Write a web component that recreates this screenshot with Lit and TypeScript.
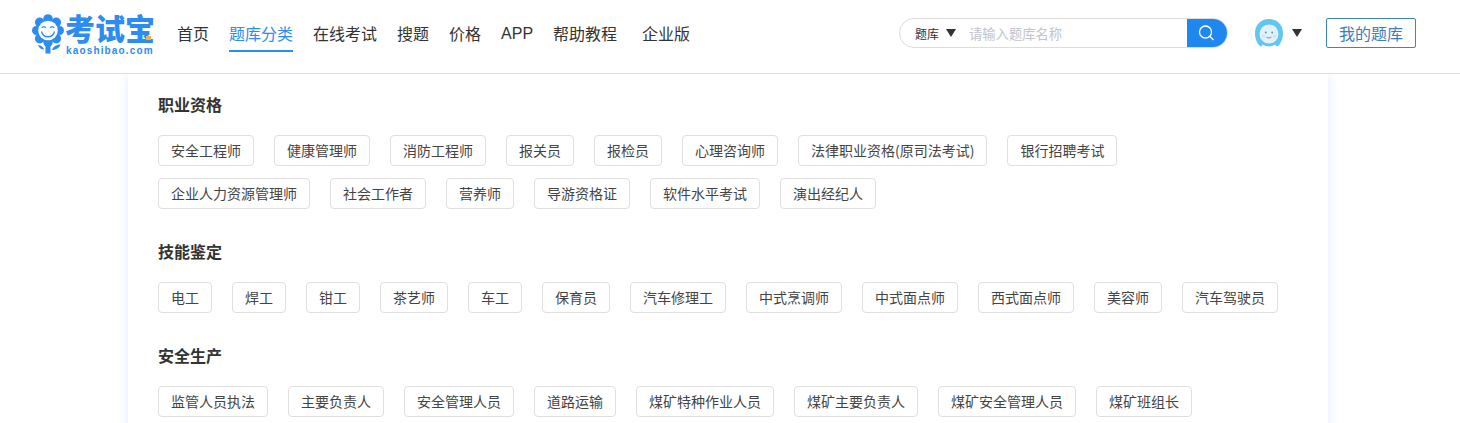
import { LitElement, html, css, svg } from "lit";
import { customElement } from "lit/decorators.js";

const NAV = [
  { t: "首页" },
  { t: "题库分类", active: true },
  { t: "在线考试" },
  { t: "搜题" },
  { t: "价格" },
  { t: "APP", cls: "app" },
  { t: "帮助教程" },
  { t: "企业版", cls: "last" },
];

const SECTIONS = [
  {
    title: "职业资格",
    tags: ["安全工程师", "健康管理师", "消防工程师", "报关员", "报检员", "心理咨询师", "法律职业资格(原司法考试)", "银行招聘考试", "企业人力资源管理师", "社会工作者", "营养师", "导游资格证", "软件水平考试", "演出经纪人"],
  },
  {
    title: "技能鉴定",
    tags: ["电工", "焊工", "钳工", "茶艺师", "车工", "保育员", "汽车修理工", "中式烹调师", "中式面点师", "西式面点师", "美容师", "汽车驾驶员"],
  },
  {
    title: "安全生产",
    tags: ["监管人员执法", "主要负责人", "安全管理人员", "道路运输", "煤矿特种作业人员", "煤矿主要负责人", "煤矿安全管理人员", "煤矿班组长"],
  },
];

const flowerIcon = svg`
  <svg class="flower" width="32" height="40" viewBox="0 0 32 40">
    <g fill="#2d8cf0">
      <circle cx="16" cy="5" r="4.800" /><circle cx="24.300" cy="8.300" r="4.800" /><circle cx="27.500" cy="16.500" r="4.500" />
      <circle cx="24.300" cy="24.700" r="4.800" /><circle cx="16" cy="28" r="4.800" /><circle cx="7.700" cy="24.700" r="4.800" />
      <circle cx="4.500" cy="16.500" r="4.500" /><circle cx="7.700" cy="8.300" r="4.800" /><circle cx="16" cy="16.500" r="11" />
      <rect x="13.500" y="30" width="5" height="9.500" />
      <path d="M20 36c.8-3 3.800-5.500 8.500-5.500-1 3.200-4.200 5.500-8.500 5.500zM12 35.500c-.6-2.400-2.700-4.200-6-4.500 .7 2.700 3 4.500 6 4.500z" />
    </g>
    <circle cx="16" cy="16.500" r="9.800" fill="#fff" />
    <path d="M9.500 17.500c1.500 7 11.500 7 13 0" fill="none" stroke="#2d8cf0" stroke-width="1.300" />
    <path d="M9.800 14c1-1.800 3-1.800 4 0M18.200 14c1-1.800 3-1.800 4 0" fill="none" stroke="#2d8cf0" stroke-width="1.200" />
  </svg>`;

const searchIcon = svg`
  <svg width="18" height="18" viewBox="0 0 18 18" fill="none" stroke="#fff" stroke-width="1.300">
    <circle cx="8.500" cy="8" r="6" /><path d="M13 12.500l3.500 3.500" />
  </svg>`;

const avatarIcon = svg`
  <svg width="30" height="30" viewBox="0 0 30 30">
    <path d="M15 1C7 1 1 7 1 15c0 6 2 10.500 5 13 1.200 1 2.500 0 2.500-1.500C13 29 17 29 21.500 26.500 21.500 28 22.800 29 24 28c3-2.500 5-7 5-13C29 7 23 1 15 1z" fill="#62c6f2" />
    <circle cx="15" cy="16" r="9.500" fill="#e3f1fb" />
    <circle cx="9.500" cy="18" r="1.800" fill="#cfe4f5" /><circle cx="20.500" cy="18" r="1.800" fill="#cfe4f5" />
    <circle cx="11.800" cy="14.500" r="1" fill="#6f8ea6" /><circle cx="18.200" cy="14.500" r="1" fill="#6f8ea6" />
    <path d="M12.500 19c1.300 1.300 3.700 1.300 5 0" fill="none" stroke="#6f8ea6" stroke-width="1" />
  </svg>`;

@customElement("app-root")
export class AppRoot extends LitElement {
  static styles = css`
    :host {
      display: block;
      height: 423px;
      overflow: hidden;
      background: #fff;
      font-family: "Noto Sans CJK SC", "Liberation Sans", sans-serif;
      color: #333;
    }
    header {
      height: 73px;
      box-sizing: content-box;
      border-bottom: 1px solid #dcdcdc;
      display: flex;
      align-items: flex-start;
      padding-left: 32px;
      background: #fff;
      position: relative;
      z-index: 1;
    }
    .logo {
      display: flex;
      align-items: flex-start;
      width: 145px;
      color: #2d8cf0;
      margin-top: 14px;
      position: relative;
    }
    .flower { flex: none; }
    .logo-text { display: flex; flex-direction: column; align-items: flex-start; margin-left: 1px; }
    .logo-cn {
      font-family: "Liberation Sans", "Noto Sans CJK SC", sans-serif;
      font-size: 30px;
      line-height: 30px;
      height: 30px;
      margin-top: 1px;
      font-weight: 900;
      white-space: nowrap;
    }
    .dot { position: absolute; left: 114px; top: 22px; width: 5px; height: 4px; background: #f5b04a; }
    .logo-en {
      font-family: "Liberation Sans", sans-serif;
      font-size: 10px;
      line-height: 12px;
      font-weight: 700;
      letter-spacing: 1.15px;
      padding-left: 1px;
    }
    nav { display: flex; gap: 20px; height: 73px; }
    .nav-item {
      font-size: 16px;
      line-height: 24px;
      padding-top: 21px;
      color: #333;
      white-space: nowrap;
      font-weight: 400;
    }
    .nav-item.app { min-width: 32px; padding-top: 22px; font-family: "Liberation Sans", sans-serif; }
    .nav-item.last { margin-left: 5px; }
    .nav-item.active { color: #2d8cf0; }
    .nav-item.active span { display: block; height: 29px; border-bottom: 2px solid #2d8cf0; }
    .spacer { flex: 1; }
    .right { display: flex; align-items: center; height: 30px; margin-top: 18px; margin-right: 44px; }
    .search {
      width: 329px;
      height: 30px;
      box-sizing: border-box;
      border: 1px solid #dcdcdc;
      border-radius: 15px;
      display: flex;
      align-items: center;
      overflow: hidden;
      margin-right: 26px;
    }
    .scope { font-size: 12px; color: #333; margin-left: 15px; white-space: nowrap; font-weight: 400; }
    .tri { width: 0; height: 0; border-left: 5px solid transparent; border-right: 5px solid transparent; border-top: 8px solid #333; flex: none; }
    .search .tri { margin-left: 7px; }
    .ph { flex: 1; font-size: 13.3px; color: #c0c4cc; margin-left: 13px; white-space: nowrap; font-weight: 400; }
    .btn {
      width: 40px;
      height: 30px;
      background: #1e88f0;
      display: flex;
      align-items: center;
      justify-content: center;
      flex: none;
      padding-right: 3px;
      box-sizing: border-box;
    }
    .avatar { display: flex; align-items: center; gap: 8px; margin-right: 24px; }
    .avatar svg { display: block; }
    .my {
      width: 90px;
      height: 30px;
      box-sizing: border-box;
      border: 1px solid #3a87b8;
      border-radius: 2px;
      color: #3d7eb8;
      font-size: 16px;
      font-weight: 400;
      display: flex;
      align-items: center;
      justify-content: center;
    }
    .page { padding-right: 4px; }
    main {
      width: 1200px;
      margin: 0 auto;
      box-sizing: border-box;
      padding: 18px 0 0 30px;
      box-shadow: 0 0 10px rgba(64, 140, 255, 0.16);
      height: 400px;
      background: #fff;
    }
    .section { margin-bottom: 30px; }
    h2 {
      margin: 0 0 19px;
      font-size: 16px;
      line-height: 24px;
      font-weight: 700;
      color: #333;
    }
    .tags { display: flex; flex-wrap: wrap; width: 1140px; row-gap: 12px; }
    .tag {
      height: 31px;
      box-sizing: border-box;
      padding: 0 12px;
      margin-right: 20px;
      border: 1px solid #e0e0e0;
      border-radius: 4px;
      font-size: 14px;
      line-height: 29px;
      font-weight: 400;
      color: #444;
      white-space: nowrap;
    }
  `;

  render() {
    return html`
      <header>
        <div class="logo">
          ${flowerIcon}
          <div class="logo-text">
            <div class="logo-cn">考试宝</div>
            <div class="logo-en">kaoshibao.com</div>
          </div>
          <i class="dot"></i>
        </div>
        <nav>
          ${NAV.map(
            (n) => html`<div class="nav-item ${n.active ? "active" : ""} ${n.cls ?? ""}">
              <span>${n.t}</span>
            </div>`
          )}
        </nav>
        <div class="spacer"></div>
        <div class="right">
          <div class="search">
            <span class="scope">题库</span>
            <i class="tri"></i>
            <span class="ph">请输入题库名称</span>
            <div class="btn">${searchIcon}</div>
          </div>
          <div class="avatar">${avatarIcon}<i class="tri"></i></div>
          <div class="my">我的题库</div>
        </div>
      </header>
      <div class="page">
        <main>
          ${SECTIONS.map(
            (s) => html`<section class="section">
              <h2>${s.title}</h2>
              <div class="tags">${s.tags.map((t) => html`<div class="tag">${t}</div>`)}</div>
            </section>`
          )}
        </main>
      </div>
    `;
  }
}
